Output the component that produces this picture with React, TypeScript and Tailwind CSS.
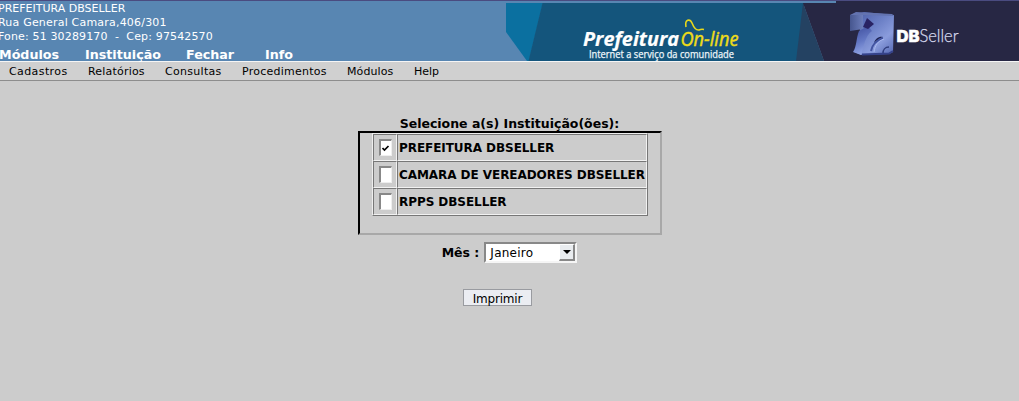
import { useState } from 'react';

const mainMenu = [
  { label: 'Módulos', width: 'w-[86px]' },
  { label: 'Instituição', width: 'w-[101px]' },
  { label: 'Fechar', width: 'w-[79px]' },
  { label: 'Info', width: 'w-[60px]' },
];

const subMenu = [
  { label: 'Cadastros', style: 'w-[79px] tracking-[0.4px]' },
  { label: 'Relatórios', style: 'w-[77px] tracking-[0.2px]' },
  { label: 'Consultas', style: 'w-[77px] tracking-[0.3px]' },
  { label: 'Procedimentos', style: 'w-[105px] tracking-[0.25px]' },
  { label: 'Módulos', style: 'w-[67px] tracking-[0.1px]' },
  { label: 'Help', style: 'w-[60px]' },
];

const institutions = ['PREFEITURA DBSELLER', 'CAMARA DE VEREADORES DBSELLER', 'RPPS DBSELLER'];

function Banner() {
  return (
    <svg width="513" height="61" viewBox="506 0 513 61" className="block shrink-0">
      <defs>
        <linearGradient id="face" x1="0" y1="0" x2="0.8" y2="1">
          <stop offset="0" stopColor="#4a5ca6" />
          <stop offset="0.45" stopColor="#6c80c6" />
          <stop offset="0.75" stopColor="#8a9cdc" />
          <stop offset="1" stopColor="#6275bd" />
        </linearGradient>
        <linearGradient id="block" x1="0" y1="0" x2="1" y2="0">
          <stop offset="0" stopColor="#46568f" />
          <stop offset="1" stopColor="#6c7dba" />
        </linearGradient>
        <linearGradient id="stem" x1="0" y1="0" x2="0.3" y2="1">
          <stop offset="0" stopColor="#3b4a9a" />
          <stop offset="0.6" stopColor="#6478c4" />
          <stop offset="1" stopColor="#8fa2e2" />
        </linearGradient>
      </defs>
      <rect x="506" y="0" width="513" height="61" fill="#5886b2" />
      <path d="M506 3H543L529 61H527L506 32Z" fill="#0b70a0" />
      <path d="M542.500 3H804V61H528.500Z" fill="#14557c" />
      <path d="M803 3L824 61H796Z" fill="#244262" />
      <path d="M803 3H836V1H1019V61H824Z" fill="#272744" />
      <path d="M506 0H1019V1H506Z" fill="#4a4b80" />
      <text x="583" y="46" textLength="96" lengthAdjust="spacingAndGlyphs" fill="#fff" stroke="#fff" strokeWidth="0.200" className="font-['Open_Sans',sans-serif] text-[19.500px] font-bold italic">Prefeitura</text>
      <text x="680.500" y="46" textLength="58" lengthAdjust="spacingAndGlyphs" fill="#efdc19" stroke="#efdc19" strokeWidth="0.450" className="font-['Open_Sans',sans-serif] text-[19.500px] italic">On-line</text>
      <path d="M686 27C684.500 19 690 18.500 692 23C694 28 696 30.500 699 30C701 29 702 29 704 29.500" fill="none" stroke="#e8d81c" strokeWidth="1.600" />
      <text x="589" y="57.500" textLength="145" lengthAdjust="spacingAndGlyphs" fill="#eef5fa" stroke="#eef5fa" strokeWidth="0.250" className="font-['Open_Sans',sans-serif] text-[10px] font-medium">Internet a serviço da comunidade</text>
      <path d="M857 14L864 12L894 15L893 52L889 54L862 55L854 52C859 46 858 38 860 30Z" fill="url(#face)" />
      <path d="M850 15L863 13L863 29L850 31Z" fill="url(#block)" />
      <path d="M850 15L856 12L892 14L894 16L863 15Z" fill="#6373b0" />
      <path d="M859 31L868 26L872 31C865 36 864 46 861 55L853 52C857 46 856 38 859 31Z" fill="url(#stem)" />
      <path d="M867 18L874 24L868 29L863 27Z" fill="#292363" />
      <path d="M874 43C875 39 879 36 883 37C879 39 877 40 874 43Z" fill="#1e2554" />
      <path d="M871 51C872 45 877 40 883 38" fill="none" stroke="#4253a0" strokeWidth="2" />
      <path d="M874 52C875 45 878 41 884 39" fill="none" stroke="#aab9ee" strokeWidth="1" />
      <path d="M883 53C883 50 885 47 889 47" fill="none" stroke="#2f3c7c" strokeWidth="1.500" />
      <path d="M862 54.500L889 53.500L893 51" fill="none" stroke="#35428a" strokeWidth="2" />
      <text x="896.500" y="42" textLength="23" lengthAdjust="spacingAndGlyphs" fill="#fff" stroke="#fff" strokeWidth="0.600" className="font-['Inter',sans-serif] text-[16.500px] font-extrabold">DB</text>
      <text x="919.500" y="42" textLength="39" lengthAdjust="spacingAndGlyphs" fill="#d7d9ed" stroke="#d7d9ed" strokeWidth="0.250" className="font-['Lato',sans-serif] text-[17px] font-light">Seller</text>
    </svg>
  );
}

export default function App() {
  const [checked, setChecked] = useState([true, false, false]);
  const toggle = (index: number) => setChecked(checked.map((value, i) => (i === index ? !value : value)));

  return (
    <div className="h-[401px] w-[1019px] overflow-hidden bg-[#cccccc] font-['DejaVu_Sans',sans-serif] text-black">
      <header className="flex h-[61px] bg-[#5886b2]">
        <div className="w-[506px] shrink-0 border-t border-[#4a4b80] text-white">
          <div className="-ml-[2px] h-[46px] pt-px text-[11px] leading-[14px] whitespace-pre">
            <p>PREFEITURA DBSELLER</p>
            <p className="tracking-[0.2px]">Rua General Camara,406/301</p>
            <p className="tracking-[0.15px]">{'Fone: 51 30289170  -  Cep: 97542570'}</p>
          </div>
          <nav className="-ml-px flex h-[14px] text-[12.7px] leading-[15px] font-bold">
            {mainMenu.map((item) => (
              <a key={item.label} className={item.width}>{item.label}</a>
            ))}
          </nav>
        </div>
        <Banner />
      </header>
      <nav className="flex h-5 border-t border-b border-t-[#f5f5f5] border-b-[#8d8d8d] bg-[#d0d0d0] pl-[9px] text-[11px] leading-[19px]">
        {subMenu.map((item) => (
          <a key={item.label} className={item.style}>{item.label}</a>
        ))}
      </nav>
      <main className="flex flex-col items-center pt-[35px]">
        <h1 className="h-[15px] text-[12.5px] leading-[16px] font-bold">Selecione a(s) Instituição(ões):</h1>
        <section className="mr-[-1px] h-[104px] w-[304px] border-2 border-t-black border-r-[#a8a8a8] border-b-[#a8a8a8] border-l-black pl-3">
          <div className="w-[276px] border border-t-[#eeeeee] border-r-[#777777] border-b-[#777777] border-l-[#eeeeee]">
            {institutions.map((name, index) => (
              <label key={name} className="flex h-[27px]">
                <span className="flex w-6 shrink-0 justify-center border border-t-[#777777] border-r-[#f2f2f2] border-b-[#f2f2f2] border-l-[#777777] pt-1">
                  <input type="checkbox" className="sr-only" checked={checked[index]} onChange={() => toggle(index)} />
                  <span className="flex h-[17px] w-[13px] items-center justify-center border-t-2 border-r border-b border-l-2 border-t-[#888888] border-r-[#eeeeee] border-b-[#eeeeee] border-l-[#888888] bg-white">
                    {checked[index] && (
                      <svg width="8" height="7" viewBox="0 0 8 7">
                        <path d="M0.500 3L2.500 5L6.500 1" fill="none" stroke="#000" strokeWidth="1.700" />
                      </svg>
                    )}
                  </span>
                </span>
                <span className="w-[250px] border border-t-[#777777] border-r-[#f2f2f2] border-b-[#f2f2f2] border-l-[#777777] pl-px text-[12px] leading-[27px] font-bold tracking-[-0.06px] whitespace-nowrap">{name}</span>
              </label>
            ))}
          </div>
        </section>
        <div className="mt-[7px] flex h-[21px] items-center">
          <span className="mr-[5px] text-[12.5px] leading-[21px] font-bold">Mês :</span>
          <button className="flex h-[21px] w-[93px] items-center justify-between border-2 border-t-[#888888] border-r-[#f5f5f5] border-b-[#f5f5f5] border-l-[#888888] bg-white pl-1 text-[12px] leading-[17px]">
            <span className="pt-px tracking-[0.25px]">Janeiro</span>
            <span className="flex h-[17px] w-[16px] items-center justify-center border-t border-r-2 border-b-2 border-l border-t-white border-r-[#888888] border-b-[#888888] border-l-white bg-[#e9ecef]">
              <svg width="8" height="4" viewBox="0 0 8 4"><path d="M0 0H8L4 4Z" fill="#000" /></svg>
            </span>
          </button>
        </div>
        <button className="mt-[26px] mr-6 h-[17px] w-[69px] border border-[#999ba0] bg-[#ebedf2] pt-px text-[12px] leading-[16px] tracking-[-0.2px]">Imprimir</button>
      </main>
    </div>
  );
}
